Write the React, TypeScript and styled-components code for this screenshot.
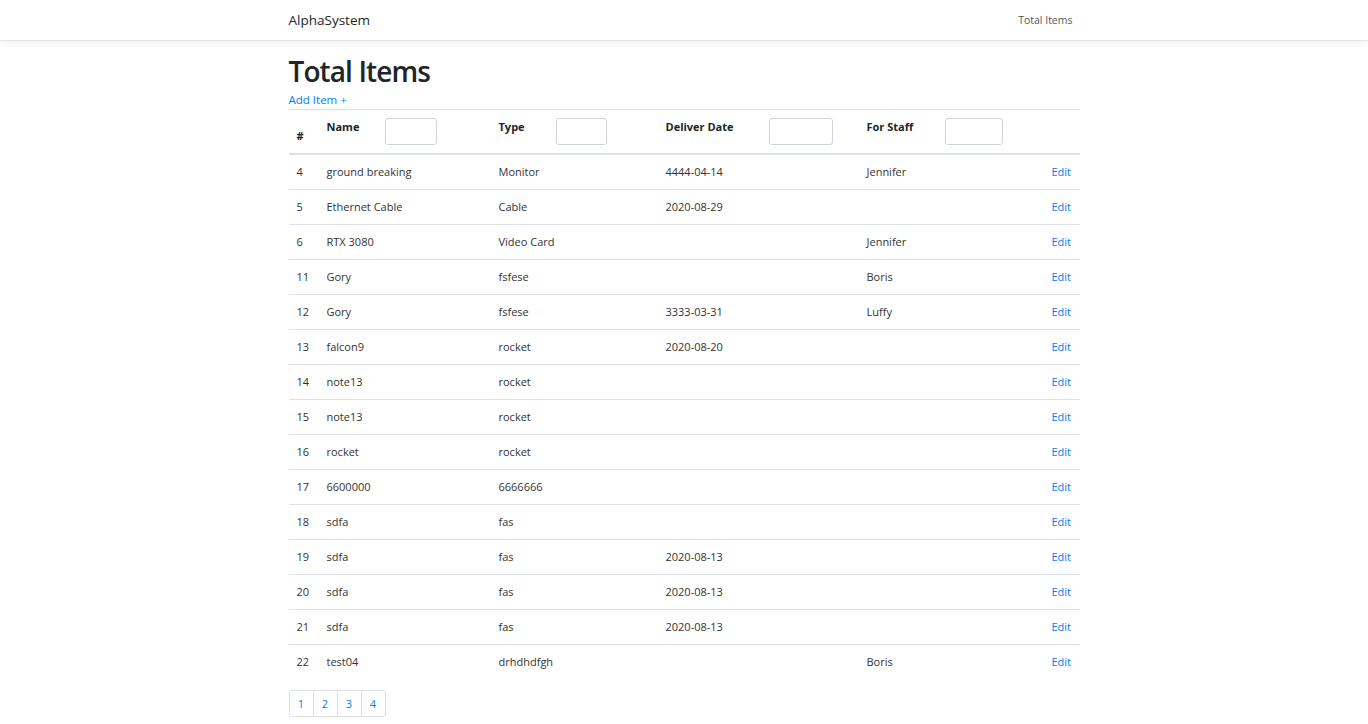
import React from "react";
import styled, { createGlobalStyle } from "styled-components";

const Global = createGlobalStyle`
  html, body { margin: 0; padding: 0; background: #fff; }
  body { font-family: "Open Sans", "Noto Sans", Arial, sans-serif; color: #212529; }
  * { box-sizing: border-box; }
`;

const Navbar = styled.nav`
  height: 41px;
  background: #fff;
  border-bottom: 1px solid #e6e6e6;
  box-shadow: 0 3px 8px rgba(0, 0, 0, 0.05);
`;

const NavInner = styled.div`
  width: 791px;
  height: 40px;
  margin: 0 auto;
  display: flex;
  align-items: center;
  justify-content: space-between;
`;

const Brand = styled.a`
  font-size: 13.5px;
  color: #212529;
  text-decoration: none;
`;

const NavLink = styled.a`
  font-size: 10.5px;
  color: #555;
  text-decoration: none;
  padding-right: 7px;
`;

const Container = styled.main`
  width: 791px;
  margin: 0 auto;
`;

const Title = styled.h1`
  margin: 10px 0 0;
  font-size: 28px;
  font-weight: 600;
  letter-spacing: -0.9px;
  line-height: 40px;
  color: #212529;
`;

const AddLink = styled.a`
  display: block;
  font-size: 11.5px;
  line-height: 18px;
  color: #007bff;
  text-decoration: none;
`;

const Table = styled.table`
  width: 791px;
  border-collapse: collapse;
  table-layout: fixed;
  margin-bottom: 10px;
`;

const Th = styled.th<{ $w: number }>`
  width: ${(p) => p.$w}px;
  text-align: left;
  vertical-align: bottom;
  padding: 8px;
  border-top: 1px solid #dee2e6;
  border-bottom: 2px solid #dee2e6;
  font-size: 11px;
  font-weight: 700;
  line-height: 18px;
`;

const HeadCell = styled.div`
  display: flex;
  align-items: flex-start;
`;

const HeadLabel = styled.span`
  line-height: 18px;
`;

const FilterInput = styled.input<{ $left: number; $w: number }>`
  margin: 0 0 0 ${(p) => p.$left}px;
  width: ${(p) => p.$w}px;
  height: 27px;
  border: 1px solid #ced4da;
  border-radius: 3px;
  padding: 0 6px;
  background: #fff;
`;

const Td = styled.td`
  padding: 8px;
  border-top: 1px solid #dee2e6;
  font-size: 11px;
  line-height: 18px;
  color: #333;
  height: 35px;
  white-space: nowrap;
`;

const EditLink = styled.a`
  color: #007bff;
  text-decoration: none;
`;

const Pagination = styled.ul`
  display: flex;
  list-style: none;
  margin: 0;
  padding: 0;
`;

const PageItem = styled.li<{ $first?: boolean; $last?: boolean }>`
  width: 25px;
  height: 27px;
  display: flex;
  align-items: center;
  justify-content: center;
  border: 1px solid #dee2e6;
  margin-left: ${(p) => (p.$first ? 0 : -1)}px;
  border-radius: ${(p) => (p.$first ? "3px 0 0 3px" : p.$last ? "0 3px 3px 0" : "0")};
  font-size: 11px;
  color: #007bff;
`;

const rows: [string, string, string, string, string][] = [
  ["4", "ground breaking", "Monitor", "4444-04-14", "Jennifer"],
  ["5", "Ethernet Cable", "Cable", "2020-08-29", ""],
  ["6", "RTX 3080", "Video Card", "", "Jennifer"],
  ["11", "Gory", "fsfese", "", "Boris"],
  ["12", "Gory", "fsfese", "3333-03-31", "Luffy"],
  ["13", "falcon9", "rocket", "2020-08-20", ""],
  ["14", "note13", "rocket", "", ""],
  ["15", "note13", "rocket", "", ""],
  ["16", "rocket", "rocket", "", ""],
  ["17", "6600000", "6666666", "", ""],
  ["18", "sdfa", "fas", "", ""],
  ["19", "sdfa", "fas", "2020-08-13", ""],
  ["20", "sdfa", "fas", "2020-08-13", ""],
  ["21", "sdfa", "fas", "2020-08-13", ""],
  ["22", "test04", "drhdhdfgh", "", "Boris"],
];

export default function App() {
  return (
    <>
      <Global />
      <Navbar>
        <NavInner>
          <Brand href="#">AlphaSystem</Brand>
          <NavLink href="#">Total Items</NavLink>
        </NavInner>
      </Navbar>
      <Container>
        <Title>Total Items</Title>
        <AddLink href="#">Add Item +</AddLink>
        <Table>
          <thead>
            <tr>
              <Th $w={30}>#</Th>
              <Th $w={172}>
                <HeadCell>
                  <HeadLabel>Name</HeadLabel>
                  <FilterInput $left={26} $w={52} />
                </HeadCell>
              </Th>
              <Th $w={167}>
                <HeadCell>
                  <HeadLabel>Type</HeadLabel>
                  <FilterInput $left={31} $w={51} />
                </HeadCell>
              </Th>
              <Th $w={201}>
                <HeadCell>
                  <HeadLabel>Deliver Date</HeadLabel>
                  <FilterInput $left={35} $w={64} />
                </HeadCell>
              </Th>
              <Th $w={185}>
                <HeadCell>
                  <HeadLabel>For Staff</HeadLabel>
                  <FilterInput $left={32} $w={58} />
                </HeadCell>
              </Th>
              <Th $w={36}></Th>
            </tr>
          </thead>
          <tbody>
            {rows.map((r) => (
              <tr key={r[0]}>
                <Td>{r[0]}</Td>
                <Td>{r[1]}</Td>
                <Td>{r[2]}</Td>
                <Td>{r[3]}</Td>
                <Td>{r[4]}</Td>
                <Td>
                  <EditLink href="#">Edit</EditLink>
                </Td>
              </tr>
            ))}
          </tbody>
        </Table>
        <Pagination>
          <PageItem $first>1</PageItem>
          <PageItem>2</PageItem>
          <PageItem>3</PageItem>
          <PageItem $last>4</PageItem>
        </Pagination>
      </Container>
    </>
  );
}
